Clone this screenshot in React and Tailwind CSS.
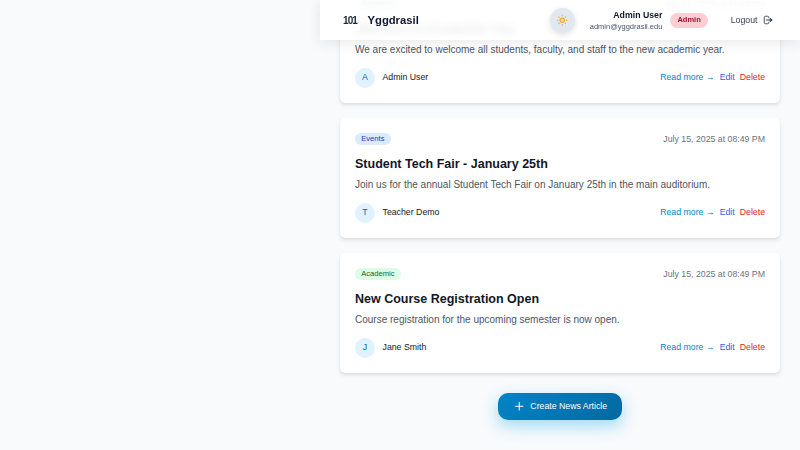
import React from "react";

const posts = [
  { tag: "Academic", tone: "bg-[#dcfce7] text-[#166534]", date: "July 15, 2025 at 11:10 PM", title: "Welcome to Academic Year", body: "We are excited to welcome all students, faculty, and staff to the new academic year.", author: "Admin User" },
  { tag: "Events", tone: "bg-[#dbeafe] text-[#1e40af]", date: "July 15, 2025 at 08:49 PM", title: "Student Tech Fair - January 25th", body: "Join us for the annual Student Tech Fair on January 25th in the main auditorium.", author: "Teacher Demo" },
  { tag: "Academic", tone: "bg-[#dcfce7] text-[#166534]", date: "July 15, 2025 at 08:49 PM", title: "New Course Registration Open", body: "Course registration for the upcoming semester is now open.", author: "Jane Smith" },
];

function SunIcon() {
  return (
    <svg viewBox="0 0 24 24" className="size-[12.5px]" fill="none" stroke="#eba834" strokeWidth="2" strokeLinecap="round">
      <circle cx="12" cy="12" r="4.2" fill="#fbd38d" />
      <path d="M12 2.5v1.5M12 20v1.5M2.5 12h1.5M20 12h1.5M5.3 5.3l1 1M17.7 17.7l1 1M5.3 18.7l1-1M17.7 6.3l1-1" />
    </svg>
  );
}

function LogoutIcon() {
  return (
    <svg viewBox="0 0 24 24" className="size-[10px]" fill="none" stroke="#334155" strokeWidth="2.2" strokeLinecap="round" strokeLinejoin="round">
      <path d="M14 7V6a3 3 0 0 0-3-3H6a3 3 0 0 0-3 3v12a3 3 0 0 0 3 3h5a3 3 0 0 0 3-3v-1M8 12h13" />
      <path d="M18 8.5l4 3.5-4 3.5z" fill="#334155" />
    </svg>
  );
}

function Header() {
  return (
    <header className="fixed top-0 right-0 z-10 flex h-10 w-[480px] items-center justify-between bg-white/90 pr-[27.5px] pl-5 shadow-[0_3px_14px_rgba(0,0,0,0.09)] backdrop-blur-[4px]">
      <div className="flex items-center gap-[7.5px] pt-px">
        <div className="flex size-5 items-center justify-center bg-white text-[10px] font-bold tracking-[-0.9px] text-[#1f2937]">101</div>
        <span className="text-[11.25px] font-bold text-[#0f172a]">Yggdrasil</span>
      </div>
      <div className="flex items-center">
        <button className="mr-[14.5px] flex size-[25px] items-center justify-center rounded-full bg-[#e2e8f0] shadow-[0_2px_6px_rgba(0,0,0,0.12)]">
          <SunIcon />
        </button>
        <div className="mr-[7.5px] pt-px text-right">
          <div className="text-[8.75px] leading-[12.5px] font-bold text-[#0f172a]">Admin User</div>
          <div className="text-[7.5px] leading-[10px] text-[#475569]">admin@yggdrasil.edu</div>
        </div>
        <span className="mr-[22.5px] flex h-[15px] items-center rounded-full bg-[#fecdd3] px-[7.5px] text-[7.5px] font-bold text-[#9f1239]">Admin</span>
        <button className="flex items-center gap-[5px] text-[8.75px] leading-[12.5px] text-[#334155]">
          <span className="pt-px">Logout</span>
          <LogoutIcon />
        </button>
      </div>
    </header>
  );
}

function PostCard({ post }) {
  return (
    <article className="h-[120px] rounded-[5px] bg-white p-[15px] shadow-[0_2.5px_4px_-0.6px_rgba(0,0,0,0.1),0_1px_2.5px_-1px_rgba(0,0,0,0.1)]">
      <div className="mb-[11px] flex h-[12.5px] items-center justify-between">
        <span className={`rounded-full px-[6.25px] py-[1.25px] text-[7.6px] leading-[10px] ${post.tone}`}>{post.tag}</span>
        <time className="text-[8.75px] leading-[12.5px] text-[#6b7280]">{post.date}</time>
      </div>
      <h2 className="mb-[3px] text-[12.5px] leading-[17.5px] font-bold text-[#111827]">{post.title}</h2>
      <p className="mb-[11px] text-[10px] leading-[15px] text-[#4b5563]">{post.body}</p>
      <div className="flex h-5 items-center justify-between text-[8.75px] leading-[12.5px]">
        <div className="flex items-center gap-[7.5px]">
          <span className="flex size-5 items-center justify-center rounded-full bg-[#e0f2fe] text-[#0369a1]">{post.author[0]}</span>
          <span className="text-[#111827]">{post.author}</span>
        </div>
        <div className="flex gap-[5px]">
          <a className="text-[#0284c7]">Read more →</a>
          <a className="text-[#2563eb]">Edit</a>
          <a className="text-[#dc2626]">Delete</a>
        </div>
      </div>
    </article>
  );
}

export default function App() {
  return (
    <div className="h-[450px] overflow-hidden bg-[#f8fafc] font-['Liberation_Sans',Arial,sans-serif]">
      <Header />
      <main className="-mt-[17.5px] ml-[340px] flex w-[440px] flex-col gap-[15px]">
        {posts.map((post) => (
          <PostCard key={post.title} post={post} />
        ))}
        <button className="mt-[5px] flex h-[27.5px] items-center gap-[5px] self-center rounded-[10px] bg-[linear-gradient(135deg,#0284c7,#0369a1)] px-[15px] text-[8.75px] text-white shadow-[0_6px_16px_rgba(14,165,233,0.38)]">
          <svg viewBox="0 0 24 24" className="size-[12.5px]" fill="none" stroke="currentColor" strokeWidth="2" strokeLinecap="round">
            <path d="M12 5v14M5 12h14" />
          </svg>
          Create News Article
        </button>
      </main>
    </div>
  );
}
